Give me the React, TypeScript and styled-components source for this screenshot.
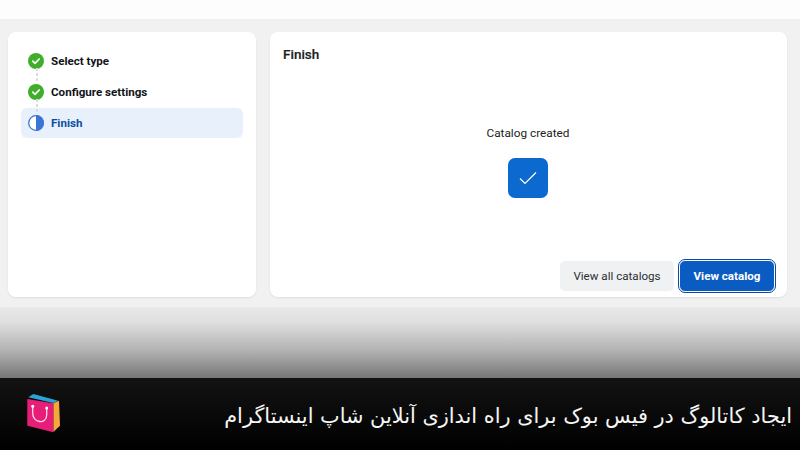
import React from "react";
import styled, { createGlobalStyle } from "styled-components";

const Global = createGlobalStyle`
  html, body { margin: 0; padding: 0; background: #fff; }
  * { box-sizing: border-box; }
  #root { width: 800px; height: 450px; overflow: hidden; }
`;

const Page = styled.div`
  width: 800px;
  height: 450px;
  display: flex;
  flex-direction: column;
  font-family: Roboto, "Liberation Sans", sans-serif;
  background: #fff;
`;
const TopStrip = styled.div`
  height: 19px;
  background: #fdfdfd;
`;
const Workspace = styled.div`
  height: 288px;
  background: #f1f1f1;
  padding: 13px 13px 10px 8px;
  display: grid;
  grid-template-columns: 248px 517px;
  column-gap: 14px;
`;
const Card = styled.div`
  background: #fff;
  border-radius: 8px;
  box-shadow: 0 1px 2px rgba(0, 0, 0, 0.08);
`;
const StepsCard = styled(Card)`
  padding: 13px;
`;
const StepList = styled.div`
  display: flex;
  flex-direction: column;
  position: relative;
`;
const Step = styled.div<{ $active?: boolean }>`
  height: ${(p) => (p.$active ? "30px" : "31px")};
  margin-top: ${(p) => (p.$active ? "1px" : "0")};
  padding: 0 7px;
  display: flex;
  align-items: center;
  gap: 7px;
  border-radius: 6px;
  background: ${(p) => (p.$active ? "#e8f0fc" : "transparent")};
  color: ${(p) => (p.$active ? "#0b4ea2" : "#111418")};
  font-size: 11.6px;
  font-weight: 700;
`;
const Connector = styled.div<{ $top: number }>`
  position: absolute;
  top: ${(p) => p.$top}px;
  left: 14.5px;
  width: 2px;
  height: 13px;
  background: repeating-linear-gradient(#dcdcdc 0 3px, transparent 3px 5px);
`;
const MainCard = styled(Card)`
  padding: 14px 12px 5px 13px;
  display: flex;
  flex-direction: column;
`;
const Title = styled.div`
  font-size: 13.5px;
  font-weight: 500;
  -webkit-text-stroke: 0.2px #1c1e21;
  line-height: 17px;
  color: #1c1e21;
`;
const Result = styled.div`
  margin-top: 62px;
  padding-right: 2px;
  display: flex;
  flex-direction: column;
  align-items: center;
  gap: 17px;
  font-size: 11.8px;
  line-height: 16px;
  color: #1c1e21;
`;
const CheckTile = styled.div`
  width: 40px;
  height: 40px;
  border-radius: 7px;
  background: #0b69d0;
  display: flex;
  align-items: center;
  justify-content: center;
`;
const Actions = styled.div`
  margin-top: auto;
  display: flex;
  justify-content: flex-end;
  align-items: center;
  gap: 5px;
`;
const SecondaryButton = styled.div`
  width: 114px;
  height: 30px;
  border-radius: 5px;
  background: #f0f1f2;
  color: #2b2e33;
  font-size: 11.6px;
  display: flex;
  align-items: center;
  justify-content: center;
`;
const PrimaryButton = styled.div`
  width: 96px;
  height: 32px;
  border-radius: 6px;
  background: #0a5cc2;
  border: 1px solid #fff;
  outline: 1.5px solid #0b4a9c;
  outline-offset: 0;
  color: #fff;
  font-size: 11.6px;
  font-weight: 700;
  display: flex;
  align-items: center;
  justify-content: center;
`;
const Fade = styled.div`
  height: 71px;
  background: linear-gradient(#e9e9e9 0%, #e0e0e0 20%, #b4b4b4 60%, #777777 100%);
`;
const Caption = styled.div`
  height: 72px;
  background: linear-gradient(#131313, #000000);
  padding: 3px 8px 0 27px;
  display: flex;
  align-items: center;
  justify-content: space-between;
`;
const LogoMark = styled.svg`
  width: 33px;
  height: 39px;
  margin-top: -5px;
  flex: none;
`;
const CaptionText = styled.div`
  direction: rtl;
  font-family: "DejaVu Sans", sans-serif;
  font-size: 20.85px;
  line-height: 28px;
  color: #f5f5f5;
  white-space: nowrap;
`;

const DoneIcon = () => (
  <svg width="16" height="16" viewBox="0 0 16 16">
    <circle cx="8" cy="8" r="8" fill="#3fae2a" />
    <path d="M4.8 8.2 7 10.3 11.2 6" fill="none" stroke="#fff" strokeWidth="1.7" strokeLinecap="round" strokeLinejoin="round" />
  </svg>
);
const HalfIcon = () => (
  <svg width="16" height="16" viewBox="0 0 16 16">
    <circle cx="8" cy="8" r="7.3" fill="#fff" stroke="#3a75d6" strokeWidth="1.3" />
    <path d="M8 0a8 8 0 0 1 0 16z" fill="#3a75d6" />
  </svg>
);
const Logo = () => (
  <LogoMark viewBox="0 0 33 39">
    <path d="M1.3 3.3 6.3 0 31.3 6.7 26.3 9z" fill="#2aa3d8" />
    <path d="M26.3 9.3 32 6.7 33 31.7 26.3 38z" fill="#f5a93a" />
    <path d="M.3 5 26.3 9.3V38.3L.3 31.7z" fill="#e61e78" />
    <path d="M5.7 12.3V19C5.7 29.5 19.7 30.5 19.7 21V14" fill="none" stroke="#ffd9e8" strokeWidth="1.3" strokeLinecap="round" />
    <circle cx="5.7" cy="12.3" r="1.5" fill="#fff" />
    <circle cx="19.7" cy="14" r="1.5" fill="#fff" />
  </LogoMark>
);

export default function App() {
  return (
    <Page>
      <Global />
      <TopStrip />
      <Workspace>
        <StepsCard>
          <StepList>
            <Step><DoneIcon /><span>Select type</span></Step>
            <Step><DoneIcon /><span>Configure settings</span></Step>
            <Step $active><HalfIcon /><span>Finish</span></Step>
            <Connector $top={23} />
            <Connector $top={54} />
          </StepList>
        </StepsCard>
        <MainCard>
          <Title>Finish</Title>
          <Result>
            <span>Catalog created</span>
            <CheckTile>
              <svg width="18" height="14" viewBox="0 0 18 14">
                <path d="M1 7.5 6 12.5 17 1.5" fill="none" stroke="#fff" strokeWidth="1.2" />
              </svg>
            </CheckTile>
          </Result>
          <Actions>
            <SecondaryButton>View all catalogs</SecondaryButton>
            <PrimaryButton>View catalog</PrimaryButton>
          </Actions>
        </MainCard>
      </Workspace>
      <Fade />
      <Caption>
        <Logo />
        <CaptionText>ایجاد کاتالوگ در فیس بوک برای راه اندازی آنلاین شاپ اینستاگرام</CaptionText>
      </Caption>
    </Page>
  );
}
